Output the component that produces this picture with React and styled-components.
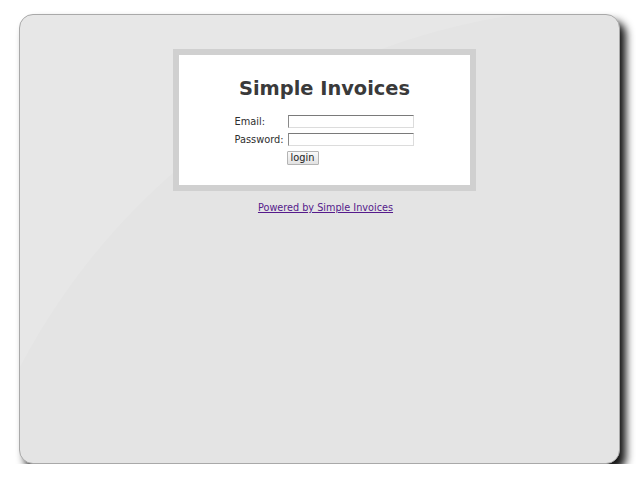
import React from 'react';
import styled, { createGlobalStyle } from 'styled-components';

const GlobalStyle = createGlobalStyle`
  html, body {
    margin: 0;
    padding: 0;
    background: #ffffff;
  }
  body {
    font-family: 'DejaVu Sans', Verdana, sans-serif;
    color: #333;
  }
`;

const Window = styled.div`
  box-sizing: border-box;
  width: 601px;
  height: 450px;
  margin: 14px 0 0 19px;
  border: 1px solid #a9a9a9;
  border-radius: 14px;
  background:
    radial-gradient(circle 671px at 594px 663px, transparent 670px, rgba(255, 255, 255, 0.12) 671px),
    #e4e4e4;
  box-shadow: 6px 7px 9px rgba(0, 0, 0, 0.92);
  overflow: hidden;
`;

const Page = styled.div`
  display: flex;
  flex-direction: column;
  align-items: center;
  padding: 34px 0 0 10px;
`;

const LoginBox = styled.div`
  box-sizing: border-box;
  width: 303px;
  height: 142px;
  border: 6px solid #d0d0d0;
  background: #ffffff;
  display: flex;
  flex-direction: column;
  align-items: center;
  padding-top: 22px;
`;

const Title = styled.h1`
  margin: 0 0 14px 0;
  font-size: 19.4px;
  line-height: 24px;
  font-weight: bold;
  color: #3a3a3a;
`;

const Form = styled.form`
  display: grid;
  grid-template-columns: 53px 126px;
  grid-auto-rows: 13px;
  row-gap: 5px;
  align-items: center;
  margin-left: -1px;
`;

const Label = styled.label`
  font-size: 9.8px;
  line-height: 13px;
  color: #2e2e2e;
  white-space: nowrap;
`;

const Input = styled.input`
  box-sizing: border-box;
  width: 126px;
  height: 13px;
  margin: 0;
  padding: 0 2px;
  border: 1px solid;
  border-color: #7a7a7a #dcdcdc #dcdcdc #8a8a8a;
  background: #fff;
  font-size: 9px;
`;

const Button = styled.button`
  grid-column: 2;
  justify-self: start;
  box-sizing: border-box;
  width: 32px;
  height: 14px;
  margin: 0 0 0 -1px;
  padding: 0;
  border: 1px solid #b4b4b4;
  border-radius: 1px;
  background: linear-gradient(#fafafa, #e2e2e2);
  font-family: 'DejaVu Sans', Verdana, sans-serif;
  font-size: 9.8px;
  line-height: 12px;
  color: #222;
`;

const Footer = styled.a`
  margin-top: 11px;
  margin-left: 2px;
  font-size: 9.7px;
  line-height: 12px;
  color: #551a8b;
  text-decoration: underline;
`;

export default function App() {
  return (
    <>
      <GlobalStyle />
      <Window>
        <Page>
          <LoginBox>
            <Title>Simple Invoices</Title>
            <Form onSubmit={(e) => e.preventDefault()}>
              <Label htmlFor="email">Email:</Label>
              <Input id="email" type="text" />
              <Label htmlFor="password">Password:</Label>
              <Input id="password" type="password" />
              <Button type="submit">login</Button>
            </Form>
          </LoginBox>
          <Footer href="#">Powered by Simple Invoices</Footer>
        </Page>
      </Window>
    </>
  );
}
